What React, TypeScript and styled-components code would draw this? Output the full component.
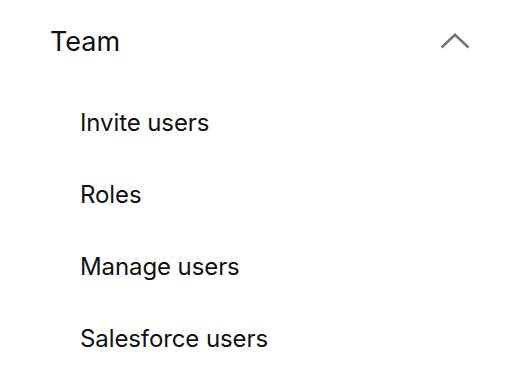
import styled, { createGlobalStyle } from 'styled-components';

const GlobalStyle = createGlobalStyle`
  body {
    margin: 0;
    background: #ffffff;
    font-family: Inter, "Noto Sans", sans-serif;
    color: #111111;
  }
`;

const Panel = styled.div`
  width: 520px;
  height: 388px;
  display: flex;
  flex-direction: column;
`;

const Header = styled.div`
  height: 82px;
  padding: 0 50px;
  display: flex;
  align-items: center;
  justify-content: space-between;
`;

const Title = styled.span`
  font-size: 27px;
  font-weight: 400;
`;

const Chevron = styled.svg`
  width: 30px;
  height: 16px;
  color: #767676;
`;

const List = styled.ul`
  list-style: none;
  margin: 4px 0 0;
  padding: 0;
`;

const Item = styled.li`
  height: 72px;
  padding-left: 80px;
  display: flex;
  align-items: center;
  font-size: 24px;
  letter-spacing: -0.1px;
`;

const items = ['Invite users', 'Roles', 'Manage users', 'Salesforce users'];

const App = () => {
  return (
    <>
      <GlobalStyle />
      <Panel>
        <Header>
          <Title>Team</Title>
          <Chevron viewBox="0 0 30 16" fill="none">
            <path d="M1.5 14.5 L15 1.8 L28.5 14.5" stroke="currentColor" strokeWidth="2.6" />
          </Chevron>
        </Header>
        <List>
          {items.map((label) => (
            <Item key={label}>{label}</Item>
          ))}
        </List>
      </Panel>
    </>
  );
};

export default App;
